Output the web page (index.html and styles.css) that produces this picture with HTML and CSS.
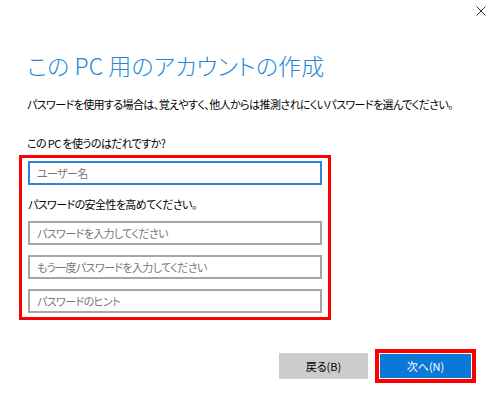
FILE: index.html
```html
<!DOCTYPE html>
<html lang="ja">
  <head>
    <meta charset="utf-8">
    <title>この PC 用のアカウントの作成</title>
    <link rel="stylesheet" href="styles.css">
  </head>
  <body>
    <div class="titlebar">
      <button class="close" aria-label="閉じる">
        <svg width="10" height="10" viewBox="0 0 10 10">
          <path d="M0.5 0.5 L9.5 9.5 M9.5 0.5 L0.5 9.5" stroke="#333" stroke-width="1" fill="none"/>
        </svg>
      </button>
    </div>

    <div class="main">
      <h1 class="title">この PC 用のアカウントの作成</h1>
      <p class="intro">パスワードを使用する場合は、覚えやすく、他人からは推測されにくいパスワードを選んでください。</p>
      <p class="label">この PC を使うのはだれですか?</p>

      <div class="highlight">
        <input class="field focused" placeholder="ユーザー名" autocomplete="off"/>
        <p class="label inner">パスワードの安全性を高めてください。</p>
        <input class="field" type="password" placeholder="パスワードを入力してください" autocomplete="off"/>
        <input class="field" type="password" placeholder="もう一度パスワードを入力してください" autocomplete="off"/>
        <input class="field" placeholder="パスワードのヒント" autocomplete="off"/>
      </div>
    </div>

    <div class="actions">
      <button class="btn back">戻る(B)</button>
      <div class="mark">
        <button class="btn next">次へ(N)</button>
      </div>
    </div>
  </body>
</html>
```

FILE: styles.css
```css
body {
  margin: 0;
  background: #fff;
  color: #000;
  font-family: "Noto Sans CJK JP", "Noto Sans", sans-serif;
  font-size: 11px;
  letter-spacing: -0.6px;
  font-feature-settings: "palt";
}

.titlebar {
  height: 22px;
  display: flex;
  justify-content: flex-end;
}

.close {
  border: none;
  background: transparent;
  padding: 0;
  margin: 6px 14px 0 0;
  width: 10px;
  height: 10px;
  display: flex;
}

.main {
  padding-left: 19px;
}

.title {
  margin: 28px 0 0 8px;
  font-size: 23px;
  line-height: 30px;
  font-weight: 300;
  letter-spacing: 0.1px;
  color: #2787d6;
}

.intro {
  margin: 16px 0 0 8px;
  line-height: 16px;
  white-space: nowrap;
}

.label {
  margin: 23px 0 0 8px;
  line-height: 16px;
}

.label.inner {
  margin: 11px 0 9px 0;
}

.highlight {
  width: 312px;
  box-sizing: border-box;
  margin-top: 4px;
  border: 3px solid #f00;
  padding: 3px 6px 4px 6px;
  display: flex;
  flex-direction: column;
}

.field {
  height: 24px;
  box-sizing: border-box;
  border: 2px solid #a6a6a6;
  padding: 0 7px;
  margin: 0;
  font-family: "Noto Sans CJK JP", "Noto Sans", sans-serif;
  font-size: 11px;
  letter-spacing: -0.6px;
  font-feature-settings: "palt";
  outline: none;
}

.field + .field {
  margin-top: 10px;
}

.field.focused {
  border-color: #2f86d6;
}

.field::placeholder {
  color: #777;
}

.actions {
  display: flex;
  justify-content: flex-end;
  align-items: center;
  gap: 7px;
  margin: 29px 24px 0 0;
}

.btn {
  border: none;
  font-family: "Noto Sans CJK JP", "Noto Sans", sans-serif;
  font-size: 11px;
  font-feature-settings: "palt";
  padding: 0;
}

.back {
  width: 89px;
  height: 26px;
  background: #cccccc;
  color: #000;
}

.mark {
  border: 4px solid #f00;
  padding: 1px;
  display: flex;
}

.next {
  width: 91px;
  height: 24px;
  background: #0a78d7;
  color: #fff;
}
```
